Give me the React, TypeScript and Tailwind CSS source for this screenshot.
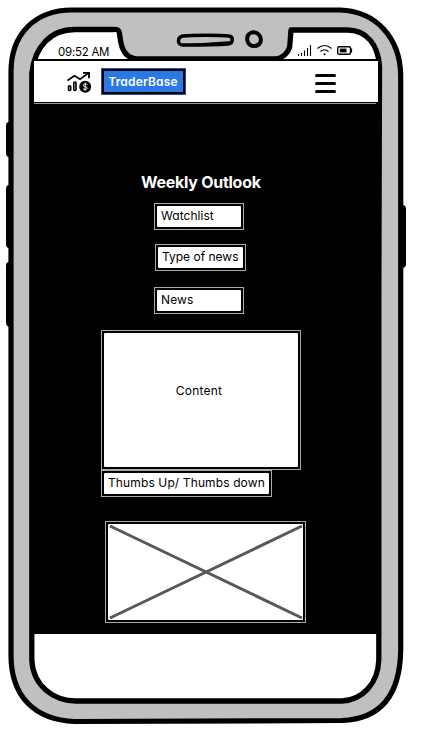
import type { ReactNode } from "react";

function PhoneFrame() {
  return (
    <svg className="absolute inset-0" width="421" height="732" viewBox="0 0 421 732" fill="none" aria-hidden="true">
      <path d="M9 122Q6 122 6 126V153Q6 157 9 157ZM9 185Q6 185 6 189V244Q6 248 9 248ZM9 262Q6 262 6 266V322Q6 326 9 327ZM402 205Q406 205 406 209V264Q406 268 402 268Z" fill="#000" />
      <path d="M11 72C11 34 35 10 72 10H340C376 11 400 38 400.700 75V650C400 696 380 719 342 720.500L75 721.500C34 720 11 696 11 655Z" fill="#c0c0c0" stroke="#000" strokeWidth="5.200" />
      <path d="M31.800 300V73C35 46 51 29.500 75 29.500H114C121 28 119 35 121 43C123 53 128 59 139 59H273C284 59 290 51 290 43L291 30H347C367 30 378 45 379.500 66L378.800 300V660C378 684 362 700 342 701H76C54 701 33 686 31.800 660Z" fill="#fff" stroke="#000" strokeWidth="5.300" strokeLinejoin="round" />
      <path d="M183 36C193 35 219 35 229 36C234 37 233 44 228 44C215 45 195 45 183 45C177 45 177 37 183 36Z" stroke="#000" strokeWidth="3.500" />
      <path d="M188 45C202 44 218 43 232 42" stroke="#000" strokeWidth="2" />
      <path d="M251.500 32.500C258 31 262 37 260.500 42C258 48 249 47 247.500 41C246.500 37 248 34 251.500 32.500Z" stroke="#000" strokeWidth="4" />
    </svg>
  );
}

function StatusIcons() {
  return (
    <svg width="60" height="16" viewBox="296 42 60 16" fill="none" stroke="#000" aria-hidden="true">
      <path d="M298.500 54V56M301.500 53V56M304.500 50.500V56M307.500 48V56M310.500 45V56" strokeWidth="1.100" />
      <path d="M317.500 48.500Q324.500 42.500 331.500 48.500M320.500 51.500Q324.500 48 328.500 51.500" strokeWidth="1.200" />
      <circle cx="324.500" cy="54.300" r="1" fill="#000" stroke="none" />
      <rect x="337.700" y="46.700" width="12.800" height="7.600" rx="1.500" strokeWidth="1.400" />
      <path d="M339.800 48.600H346.500V52.400H339.800Z" fill="#000" stroke="none" />
      <path d="M351.500 48.500V52.500" strokeWidth="1.200" />
    </svg>
  );
}

function TradeIcon() {
  return (
    <svg width="26" height="24" viewBox="66 69 26 24" fill="none" stroke="#000" aria-hidden="true">
      <path d="M67.500 79.500L74.500 74.700L80 78.200L88.500 72" strokeWidth="1.700" />
      <path d="M83 71.800H89V77.300" strokeWidth="1.800" />
      <rect x="68.500" y="84.700" width="2.200" height="4.800" rx="1" strokeWidth="1.600" />
      <rect x="73.800" y="81" width="2.200" height="8.500" rx="1" strokeWidth="1.600" />
      <circle cx="85.200" cy="85.700" r="6" fill="#000" stroke="none" />
      <path d="M87.300 83.700Q86.500 82.900 85.200 82.900C82.700 82.900 82.700 85.700 85.200 85.700C87.700 85.700 87.700 88.500 85.200 88.500Q83.800 88.500 83.100 87.700M85.200 81.700V89.700" stroke="#fff" strokeWidth="1" />
    </svg>
  );
}

function SketchBox({ className, children }: { className: string; children: ReactNode }) {
  return (
    <div className={`border border-[#aaa] bg-black p-[2px] ${className}`}>
      <div className="flex h-full w-full items-center rounded-[1px] bg-white">{children}</div>
    </div>
  );
}

export default function App() {
  return (
    <main className="relative h-[732px] w-[421px] overflow-hidden bg-white font-['Inter','Noto_Sans',sans-serif] text-[12px] leading-4 text-black [font-feature-settings:'cv11']">
      <PhoneFrame />
      <div className="relative ml-[34px] flex w-[344px] flex-col pt-[42px]">
        <div className="flex h-[17px] items-start justify-between pr-[22px] pl-[24px]">
          <time className="mt-[2px] text-[11.5px] tracking-[-0.25px]">09:52 AM</time>
          <StatusIcons />
        </div>
        <header className="flex h-[44px] items-center border-t-2 border-b border-black bg-white pr-[42px] pl-[32px]">
          <TradeIcon />
          <div className="ml-[9px] flex h-[27px] w-[85px] items-center justify-center border border-[#2355a4] bg-black p-[2px] font-semibold text-white">
            <span className="flex h-full w-full items-center justify-center bg-[#2b78e4] pr-px tracking-[0.15px]">TraderBase</span>
          </div>
          <button aria-label="Menu" className="mt-[3px] ml-auto flex w-[21px] flex-col gap-[5px]">
            <span className="h-[3px] rounded-full bg-black" />
            <span className="h-[3px] rounded-full bg-black" />
            <span className="h-[3px] rounded-full bg-black" />
          </button>
        </header>
        <section className="-ml-[3px] flex h-[531px] w-[349px] flex-col bg-black">
          <div className="ml-[3px] h-px w-[342px] shrink-0 bg-[#999]" />
          <h1 className="mt-[66px] ml-[110px] h-[24px] text-[16px] leading-6 font-bold tracking-[-0.27px] text-white">Weekly Outlook</h1>
          <SketchBox className="mt-[9px] ml-[123px] h-[27px] w-[90px]"><span className="pb-px pl-[4px] tracking-[0.05px]">Watchlist</span></SketchBox>
          <SketchBox className="mt-[14px] ml-[124px] h-[27px] w-[91px]"><span className="pb-px pl-[4px] whitespace-nowrap">Type of news</span></SketchBox>
          <SketchBox className="mt-[16px] ml-[123px] h-[27px] w-[90px]"><span className="pb-px pl-[4px] tracking-[0.15px]">News</span></SketchBox>
          <SketchBox className="mt-[16px] ml-[70px] h-[140px] w-[200px]"><span className="w-full pr-[4px] pb-[19px] text-center tracking-[0.2px]">Content</span></SketchBox>
          <SketchBox className="ml-[70px] h-[27px] w-[171px]"><span className="pb-px pl-[4px] tracking-[0.12px] whitespace-nowrap">Thumbs Up/ Thumbs down</span></SketchBox>
          <SketchBox className="mt-[24px] ml-[74px] h-[102px] w-[201px]">
            <svg width="195" height="96" viewBox="108 524 195 96" fill="none" aria-hidden="true">
              <path d="M110 526L302 618M110 618L302 526" stroke="#58585a" strokeWidth="3" />
            </svg>
          </SketchBox>
        </section>
      </div>
    </main>
  );
}
